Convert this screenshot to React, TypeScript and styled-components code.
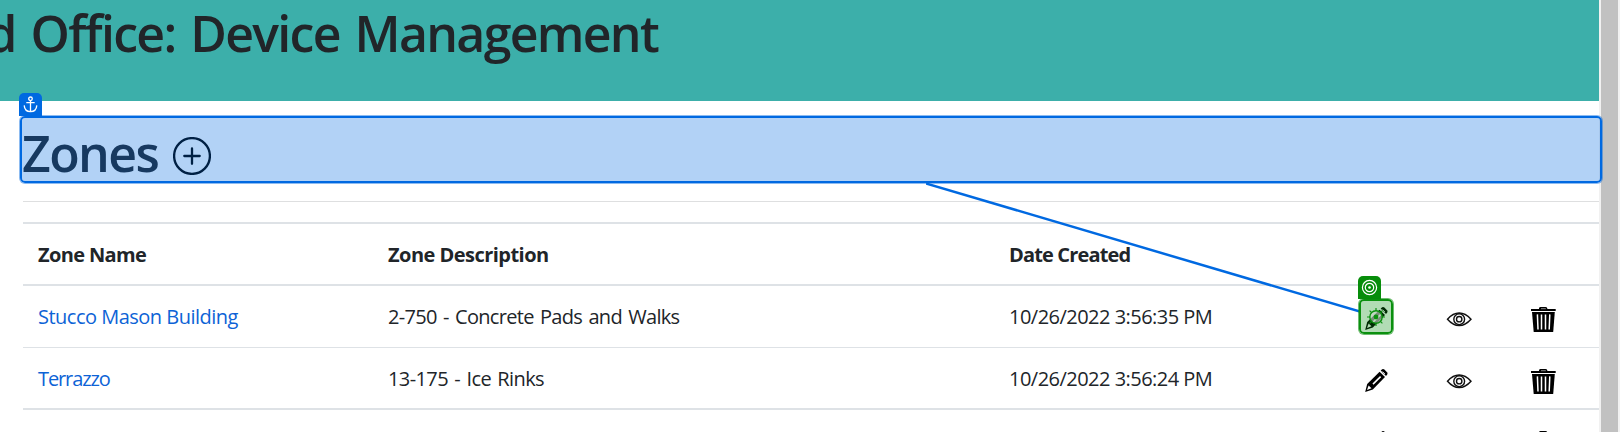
import React from 'react';
import styled, { createGlobalStyle } from 'styled-components';

const GlobalStyle = createGlobalStyle`
  * { box-sizing: border-box; }
  html, body { margin: 0; overflow: hidden; background: #fff; }
  body { font-family: "Segoe UI", "Open Sans", "Noto Sans", sans-serif; color: #212529; }
`;

const Viewport = styled.div`
  position: relative;
  display: flex;
  width: 1620px;
  height: 432px;
  overflow: hidden;
`;
const Content = styled.div`
  width: 1599px;
  flex: none;
`;
const Scrollbar = styled.div`
  width: 21px;
  flex: none;
  background: #f1f1f1;
  padding: 0 2px;
`;
const Thumb = styled.div`
  height: 100%;
  background: #c1c1c1;
`;
const Banner = styled.header`
  display: flex;
  justify-content: flex-end;
  height: 101px;
  padding-right: 941px;
  background: #3cafaa;
  overflow: hidden;
`;
const Title = styled.h1`
  margin: 0;
  font-size: 50px;
  font-weight: 600;
  line-height: 66px;
  letter-spacing: -1.7px;
  word-spacing: 3.5px;
  white-space: nowrap;
`;
const Main = styled.main`
  padding-left: 23px;
`;
const SectionHeading = styled.div`
  display: flex;
  align-items: center;
  gap: 15px;
  height: 66px;
  margin-top: 17px;
  padding-top: 10px;
`;
const SectionTitle = styled.h1`
  margin: -6px 0 0 -1px;
  font-size: 50px;
  font-weight: 600;
  line-height: 66px;
  letter-spacing: -1.6px;
`;
const Divider = styled.hr`
  height: 1px;
  margin: 17px 0 20px;
  border: 0;
  background: #dedfe0;
`;
const Table = styled.div`
  border-top: 2px solid #dee2e6;
`;
const Row = styled.div<{ $line: number }>`
  display: grid;
  grid-template-columns: 350px 621px 356px 82px 84px 1fr;
  height: 62px;
  border-bottom: ${(p) => p.$line}px solid #dee2e6;
`;
const Cell = styled.div<{ $tracking: number; $spacing?: number; $bold?: boolean }>`
  padding: 17px 0 0 15px;
  font-size: 20px;
  line-height: 28px;
  font-weight: ${(p) => (p.$bold ? 700 : 400)};
  letter-spacing: ${(p) => p.$tracking}px;
  word-spacing: ${(p) => p.$spacing ?? 0}px;
  white-space: nowrap;
`;
const ZoneLink = styled.a`
  color: #0d63d6;
  text-decoration: none;
`;
const IconCell = styled.div`
  padding: 20px 0 0 14px;
  svg { display: block; }
`;

const Outline = styled.div`
  position: absolute;
  left: 20px;
  top: 116px;
  width: 1582px;
  height: 67px;
  border: 2px solid #0069e1;
  border-radius: 5px;
  box-shadow: 0 0 0 1px rgba(0, 105, 225, 0.45);
  background: rgba(0, 105, 225, 0.3);
  background-clip: padding-box;
`;
const TargetOutline = styled(Outline)`
  left: 1359px;
  top: 299px;
  width: 34px;
  height: 35px;
  border-color: #0b900f;
  box-shadow: 0 0 0 1px rgba(11, 144, 15, 0.6);
  background-color: rgba(0, 140, 10, 0.3);
`;
const AnchorTag = styled.div`
  position: absolute;
  display: grid;
  place-items: center;
  left: 19px;
  top: 93px;
  width: 23px;
  height: 23px;
  border-radius: 5px 5px 0 0;
  background: #0069e1;
`;
const TargetTag = styled(AnchorTag)`
  left: 1358px;
  top: 276px;
  background: #078d0b;
`;
const Connector = styled.svg`
  position: absolute;
  left: 926px;
  top: 183px;
`;
const Crosshair = styled.svg`
  position: absolute;
  left: 1366px;
  top: 307px;
`;

const PlusCircle = () => (
  <svg width="38" height="38" viewBox="0 0 38 38" fill="none" stroke="#000" strokeWidth="2.3" strokeLinecap="round">
    <circle cx="19" cy="19" r="17.9" />
    <path d="M19 11.4v15.4M11.3 19h15.4" />
  </svg>
);
const Pencil = () => (
  <svg width="25" height="25" viewBox="0 0 25 25">
    <path d="M1.2 24 3.2 16 15.6 3.7 21 9.1 8.8 21.4Z" fill="#000" />
    <path d="M16.7 2.6 18.2 1.3Q19.4.6 20.4 1.6L23 4.3Q24 5.4 23.2 6.6L22 7.9Z" fill="#000" />
    <path d="M3 22 4.6 17.4 7.5 20.3Z" fill="#fff" />
    <path d="M9 16.1 16.6 8.6" stroke="#fff" strokeWidth="1.5" />
    <path d="M18.6 3.6 21 6" stroke="#fff" strokeWidth=".8" />
  </svg>
);
const Eye = () => (
  <svg width="26" height="26" viewBox="0 -0.7 26 26" fill="none" stroke="#111" strokeWidth="1.4">
    <path d="M1.5 12.5Q7 6.3 13.2 6.3T25 12.5Q19.4 18.8 13.2 18.8T1.5 12.5Z" />
    <circle cx="13.2" cy="12.5" r="5.4" />
    <circle cx="13.2" cy="12.5" r="2.7" />
  </svg>
);
const Trash = () => (
  <svg width="27" height="26" viewBox="0 0 27 26">
    <path d="M9 3V2.2Q9.3 1 10.5 1H15.5Q16.8 1 17.3 2.2V3H25.7V5H1V3Z" fill="#000" />
    <path d="M2 6H24.8L23.2 26H3.7Z" fill="#000" />
    <path d="M11 2.7h4.8" stroke="#aaa" strokeWidth=".8" />
    <path d="M7.4 8.4 8 23.5M11.5 8.4V23.5M15.5 8.4V23.5M19.8 8.4 19.2 23.5" stroke="#fff" strokeWidth="1.5" />
  </svg>
);
const Anchor = () => (
  <svg width="15" height="17" viewBox="0 0 15 17" fill="none" stroke="#fff" strokeWidth="1.3">
    <circle cx="7.5" cy="2.8" r="1.8" />
    <path d="M7.5 4.6V15.5M3.3 6.6H11.7M1.2 9.4Q1.6 15.5 7.5 15.7 13.4 15.5 13.8 9.4" />
  </svg>
);
const Rings = () => (
  <svg width="17" height="17" viewBox="0 0 17 17" fill="none" stroke="#fff" strokeWidth="1.2">
    <circle cx="8.5" cy="8.5" r="7.1" />
    <circle cx="8.5" cy="8.5" r="4.2" />
    <circle cx="8.5" cy="8.5" r="1.3" fill="#fff" stroke="none" />
  </svg>
);

type Zone = { name: string; desc: string; date: string; tracking: [number, number, number]; line: number };
const zones: Zone[] = [
  { name: 'Stucco Mason Building', desc: '2-750 - Concrete Pads and Walks', date: '10/26/2022 3:56:35 PM', tracking: [-0.51, -0.68, -0.52], line: 1 },
  { name: 'Terrazzo', desc: '13-175 - Ice Rinks', date: '10/26/2022 3:56:24 PM', tracking: [-1.1, -0.6, -0.52], line: 2 },
  { name: '', desc: '', date: '', tracking: [0, 0, 0], line: 1 },
];

export default function App() {
  return (
    <Viewport>
      <GlobalStyle />
      <Content>
        <Banner>
          <Title>d Office: Device Management</Title>
        </Banner>
        <Main>
          <SectionHeading>
            <SectionTitle>Zones</SectionTitle>
            <PlusCircle />
          </SectionHeading>
          <Divider />
          <Table>
            <Row $line={2}>
              <Cell $bold $tracking={-0.64}>Zone Name</Cell>
              <Cell $bold $tracking={-0.53}>Zone Description</Cell>
              <Cell $bold $tracking={-0.85}>Date Created</Cell>
            </Row>
            {zones.map((z, i) => (
              <Row key={i} $line={z.line}>
                <Cell $tracking={z.tracking[0]}><ZoneLink>{z.name}</ZoneLink></Cell>
                <Cell $tracking={z.tracking[1]} $spacing={1.7}>{z.desc}</Cell>
                <Cell $tracking={z.tracking[2]}>{z.date}</Cell>
                <IconCell><Pencil /></IconCell>
                <IconCell><Eye /></IconCell>
                <IconCell><Trash /></IconCell>
              </Row>
            ))}
          </Table>
        </Main>
      </Content>
      <Scrollbar><Thumb /></Scrollbar>
      <Connector width="434" height="131" viewBox="0 0 434 131">
        <path d="M0 .5 434 128.6" stroke="#0069e1" strokeWidth="2.5" />
      </Connector>
      <Outline />
      <AnchorTag><Anchor /></AnchorTag>
      <TargetOutline />
      <TargetTag><Rings /></TargetTag>
      <Crosshair width="20" height="20" viewBox="0 0 20 20" fill="none">
        <circle cx="10" cy="10" r="6.2" fill="#c9d6c9" fillOpacity=".6" stroke="#0b900f" strokeWidth="1.4" />
        <circle cx="10" cy="10" r="2.4" fill="#0b900f" />
        <path d="M10 1v3M10 16v3M1 10h3M16 10h3M3.6 3.6l2 2M16.4 3.6l-2 2M3.6 16.4l2-2M16.4 16.4l-2-2" stroke="#0b900f" strokeWidth="1.2" />
      </Crosshair>
    </Viewport>
  );
}
